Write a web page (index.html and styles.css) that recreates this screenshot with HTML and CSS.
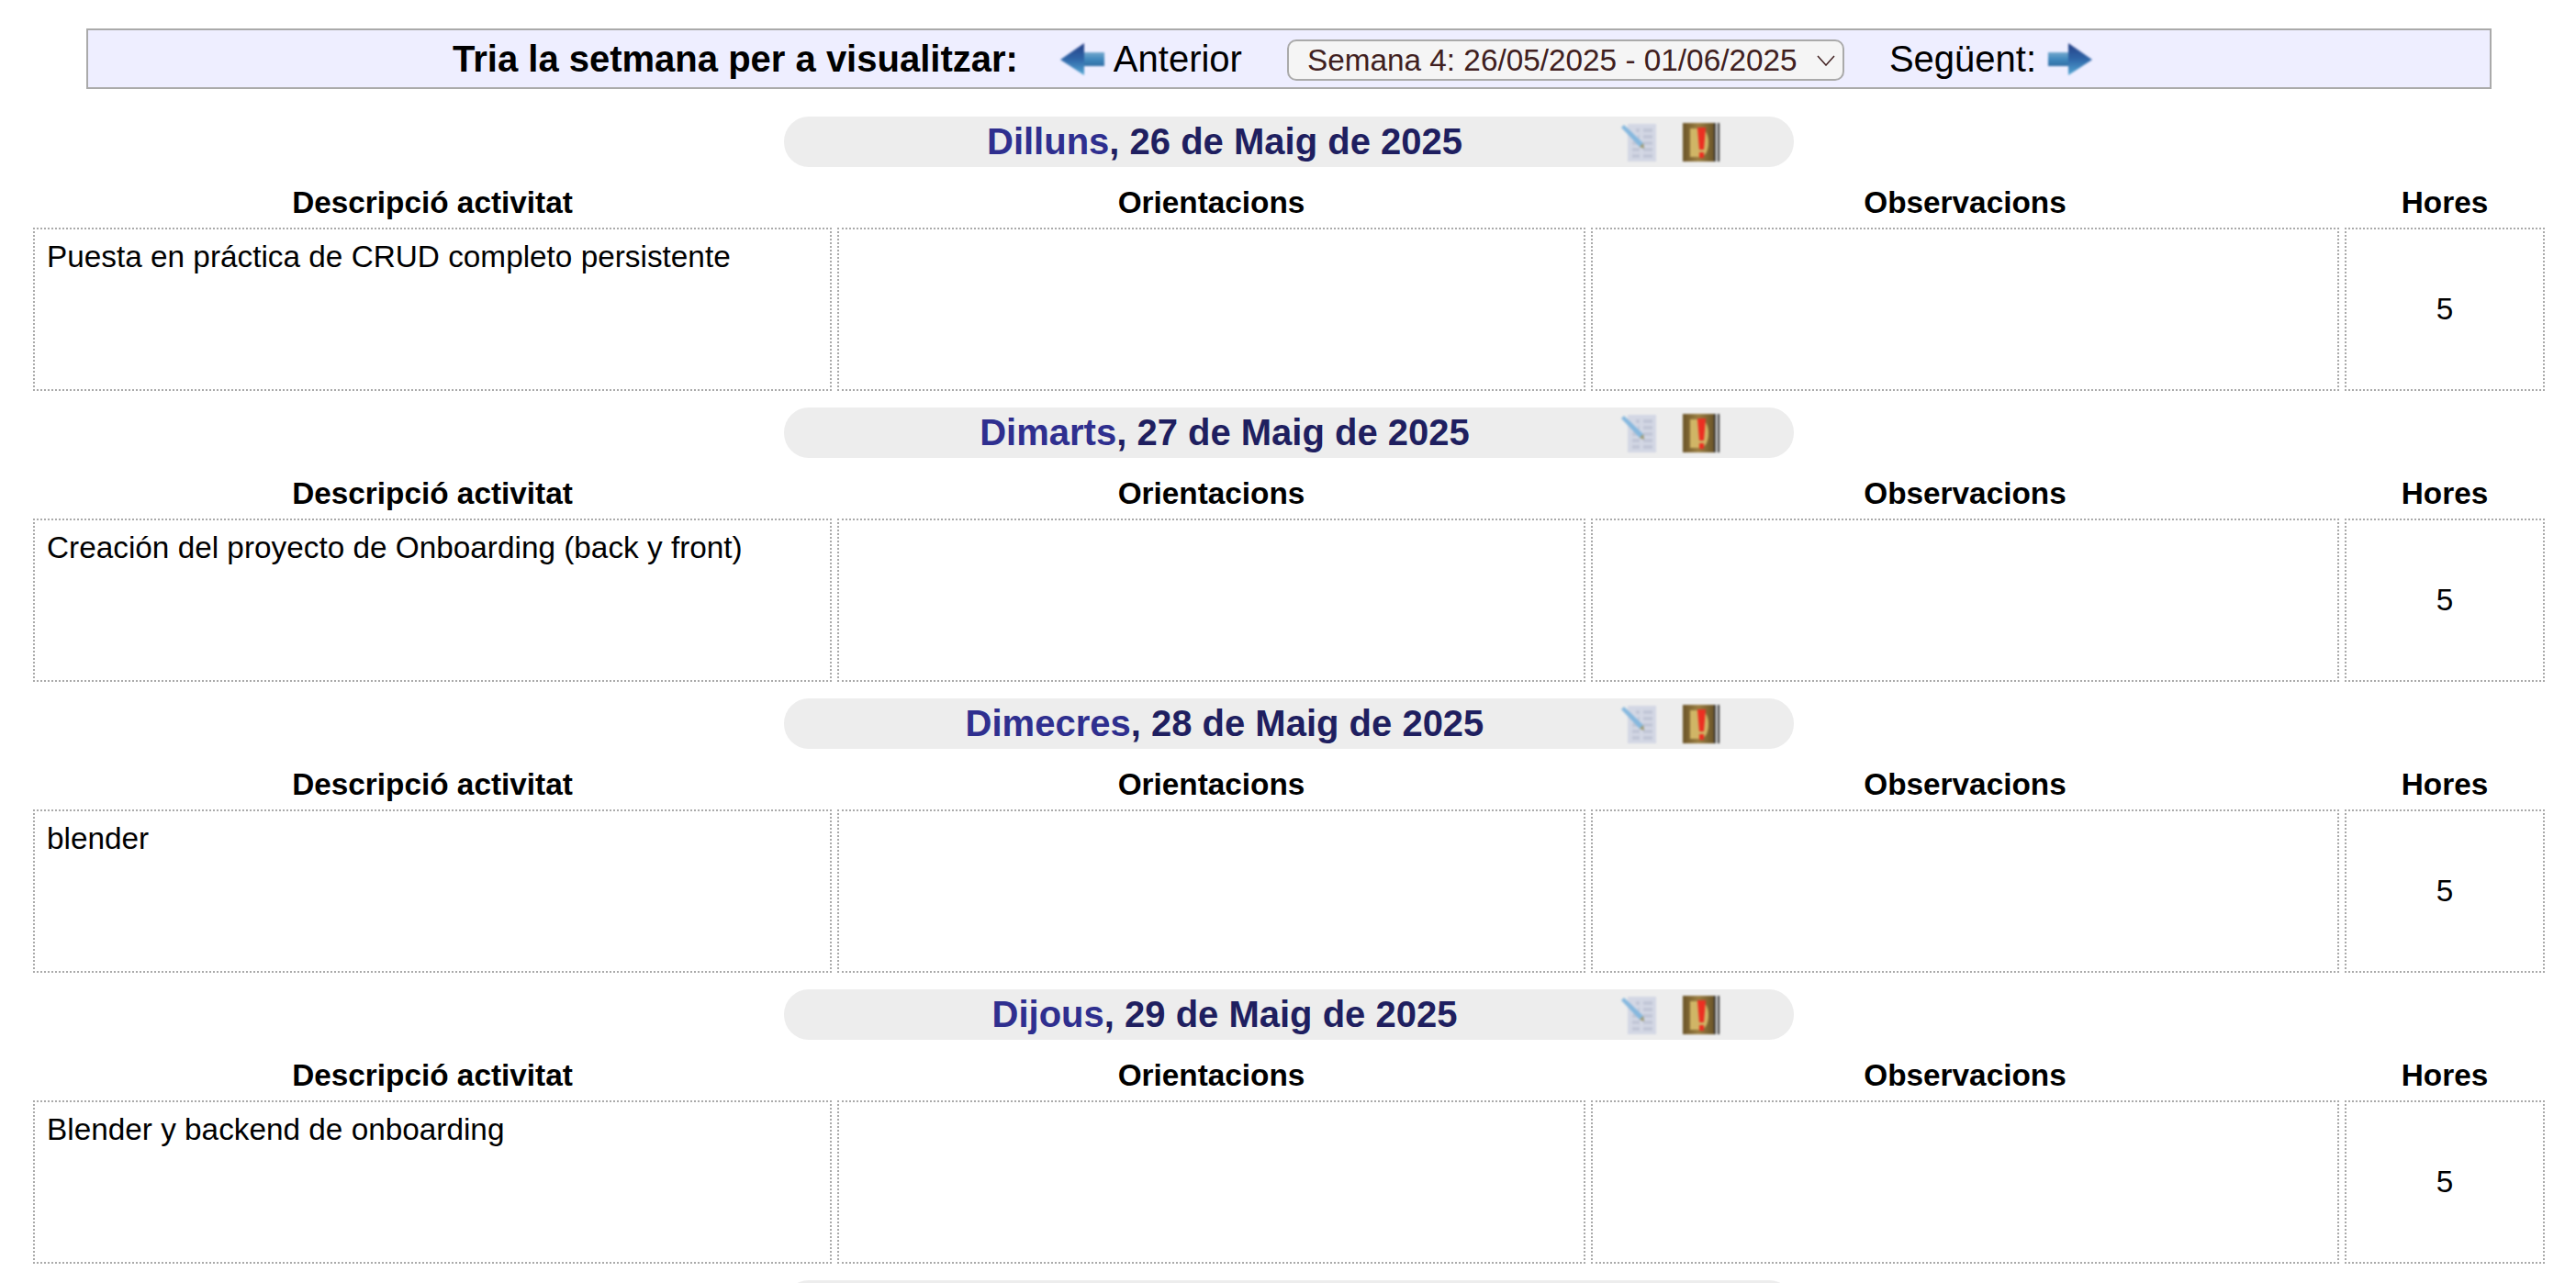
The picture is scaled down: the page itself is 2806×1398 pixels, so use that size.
FILE: index.html
```html
<!DOCTYPE html>
<html lang="ca">
<head>
<meta charset="utf-8">
<title>Setmana</title>
<link rel="stylesheet" href="styles.css">
</head>
<body>
<svg class="defs" width="0" height="0" aria-hidden="true">
  <defs>
    <linearGradient id="head" x1="0" y1="0" x2="0" y2="1"><stop offset="0" stop-color="#253f86"/><stop offset="0.5" stop-color="#2f66a8"/><stop offset="1" stop-color="#55a8d4"/></linearGradient>
    <linearGradient id="shaft" x1="0" y1="0" x2="0" y2="1"><stop offset="0" stop-color="#74a8cd"/><stop offset="0.5" stop-color="#4189bd"/><stop offset="1" stop-color="#316fa6"/></linearGradient>
    <linearGradient id="cover" x1="0" y1="0" x2="1" y2="0"><stop offset="0" stop-color="#6b5428"/><stop offset="0.5" stop-color="#9c7f42"/><stop offset="1" stop-color="#6a5428"/></linearGradient>
    <symbol id="arrow-left" viewBox="0 0 48 35">
      <rect x="20" y="10" width="28" height="15" fill="url(#shaft)"/>
      <path d="M0 18 L26 0 L26 35 Z" fill="url(#head)"/>
    </symbol>
    <symbol id="arrow-right" viewBox="0 0 48 35">
      <rect x="0" y="10" width="28" height="15" fill="url(#shaft)"/>
      <path d="M48 18 L22 0 L22 35 Z" fill="url(#head)"/>
    </symbol>
    <symbol id="note" viewBox="0 0 38 42">
      <rect x="7" y="1" width="31" height="41" fill="#d3d7e4"/>
      <path d="M16 8h4M24 8h10M18 15h2M24 15h10M12 22h8M24 22h10M12 29h8M24 29h10M12 36h8M24 36h10" stroke="#c2c7d7" stroke-width="4"/>
      <path d="M0 5 L3 2 L24 22 L25 28 L20 26 Z" fill="#86b8de"/>
      <path d="M20 26 L25 28 L24 22 Z" fill="#a39a70"/>
    </symbol>
    <symbol id="book" viewBox="0 0 40 42">
      <rect x="0" y="0" width="34" height="42" fill="url(#cover)"/>
      <path d="M8 6 H18 C25 6 28 13 28 21 C28 30 25 37 18 37 H8 Z" fill="#d0b566"/>
      <rect x="34" y="0" width="2" height="42" fill="#3a3a3a"/>
      <rect x="36" y="0" width="2" height="42" fill="#efefef"/>
      <rect x="38" y="0" width="2" height="42" fill="#333"/>
      <path d="M16 5 H25 L23 29 H18 Z" fill="#ec2f22"/>
      <rect x="18" y="32" width="5" height="6" fill="#ec2f22"/>
    </symbol>
  </defs>
</svg>
<main class="page">
  <div class="week-bar">
    <span class="week-label">Tria la setmana per a visualitzar:</span>
    <span class="week-link prev"><svg class="arrow"><use href="#arrow-left"/></svg>Anterior</span>
    <select class="week-select"><option>Semana 4: 26/05/2025 - 01/06/2025</option></select>
    <span class="week-link next">Següent:<svg class="arrow"><use href="#arrow-right"/></svg></span>
  </div>

  <section class="day">
    <div class="day-pill">
      <div class="day-title"><span class="day-name">Dilluns</span>, 26 de Maig de 2025</div>
      <svg class="ico"><use href="#note"/></svg><svg class="ico"><use href="#book"/></svg>
    </div>
    <div class="grid">
      <div class="head">Descripció activitat</div><div class="head">Orientacions</div><div class="head">Observacions</div><div class="head">Hores</div>
      <div class="cell">Puesta en práctica de CRUD completo persistente</div><div class="cell"></div><div class="cell"></div><div class="cell hours">5</div>
    </div>
  </section>

  <section class="day">
    <div class="day-pill">
      <div class="day-title"><span class="day-name">Dimarts</span>, 27 de Maig de 2025</div>
      <svg class="ico"><use href="#note"/></svg><svg class="ico"><use href="#book"/></svg>
    </div>
    <div class="grid">
      <div class="head">Descripció activitat</div><div class="head">Orientacions</div><div class="head">Observacions</div><div class="head">Hores</div>
      <div class="cell">Creación del proyecto de Onboarding (back y front)</div><div class="cell"></div><div class="cell"></div><div class="cell hours">5</div>
    </div>
  </section>

  <section class="day">
    <div class="day-pill">
      <div class="day-title"><span class="day-name">Dimecres</span>, 28 de Maig de 2025</div>
      <svg class="ico"><use href="#note"/></svg><svg class="ico"><use href="#book"/></svg>
    </div>
    <div class="grid">
      <div class="head">Descripció activitat</div><div class="head">Orientacions</div><div class="head">Observacions</div><div class="head">Hores</div>
      <div class="cell">blender</div><div class="cell"></div><div class="cell"></div><div class="cell hours">5</div>
    </div>
  </section>

  <section class="day">
    <div class="day-pill">
      <div class="day-title"><span class="day-name">Dijous</span>, 29 de Maig de 2025</div>
      <svg class="ico"><use href="#note"/></svg><svg class="ico"><use href="#book"/></svg>
    </div>
    <div class="grid">
      <div class="head">Descripció activitat</div><div class="head">Orientacions</div><div class="head">Observacions</div><div class="head">Hores</div>
      <div class="cell">Blender y backend de onboarding</div><div class="cell"></div><div class="cell"></div><div class="cell hours">5</div>
    </div>
  </section>

  <section class="day">
    <div class="day-pill"></div>
  </section>
</main>
</body>
</html>
```
FILE: styles.css
```css
html, body { margin: 0; padding: 0; background: #fff; }
body { font-family: "Liberation Sans", Arial, sans-serif; color: #000; }
.defs { position: absolute; }
.page { height: 1398px; overflow: hidden; padding-top: 31px; box-sizing: border-box; }

.week-bar {
  box-sizing: border-box;
  width: 2620px;
  height: 66px;
  margin-left: 94px;
  background: #eeeeff;
  border: 2px solid #aaaaaa;
  display: flex;
  align-items: center;
  padding-left: 397px;
}
.week-label { font-size: 40px; font-weight: bold; }
.week-link { font-size: 40px; display: flex; align-items: center; }
.prev { margin-left: 46px; }
.next { margin-left: 49px; }
.arrow { width: 48px; height: 35px; filter: blur(0.8px); }
.prev .arrow { margin-right: 10px; }
.next .arrow { margin-left: 13px; }
.week-select {
  appearance: none;
  box-sizing: border-box;
  width: 607px;
  height: 45px;
  margin: 3px 0 0 49px;
  padding: 0 0 0 20px;
  font: 33.33px "Liberation Sans", Arial, sans-serif;
  color: #402020;
  background-color: #f5f5f5;
  background-image: url("data:image/svg+xml,%3Csvg xmlns='http://www.w3.org/2000/svg' width='20' height='12'%3E%3Cpath d='M1 1 L10 11 L19 1' fill='none' stroke='%23402020' stroke-width='1.5'/%3E%3C/svg%3E");
  background-repeat: no-repeat;
  background-position: right 8px center;
  border: 2px solid #aaaaaa;
  border-radius: 10px;
}

.day { margin-bottom: 18px; }
.day-pill {
  box-sizing: border-box;
  width: 1100px;
  height: 55px;
  margin: 30px 0 0 854px;
  background: #ededed;
  border-radius: 27px;
  display: flex;
  align-items: center;
}
.day + .day .day-pill { margin-top: 0; }
.day-title {
  box-sizing: border-box;
  width: 912px;
  padding-left: 48px;
  text-align: center;
  font-size: 40px;
  font-weight: bold;
  color: #1f1f60;
}
.day-name { color: #2f2f8f; }
.ico { width: 38px; height: 42px; filter: blur(0.8px); }
.ico + .ico { width: 40px; margin-left: 29px; }

.grid {
  display: grid;
  grid-template-columns: 870px 815px 815px 218px;
  column-gap: 6px;
  margin-left: 36px;
  width: 2736px;
}
.head {
  height: 66px;
  line-height: 78px;
  text-align: center;
  font-size: 33.33px;
  font-weight: bold;
}
.cell {
  box-sizing: border-box;
  height: 178px;
  border: 2px dotted #aaaaaa;
  padding: 11px 13px;
  font-size: 33.33px;
  line-height: 38px;
}
.hours {
  display: flex;
  align-items: center;
  justify-content: center;
  padding: 0;
}
```
